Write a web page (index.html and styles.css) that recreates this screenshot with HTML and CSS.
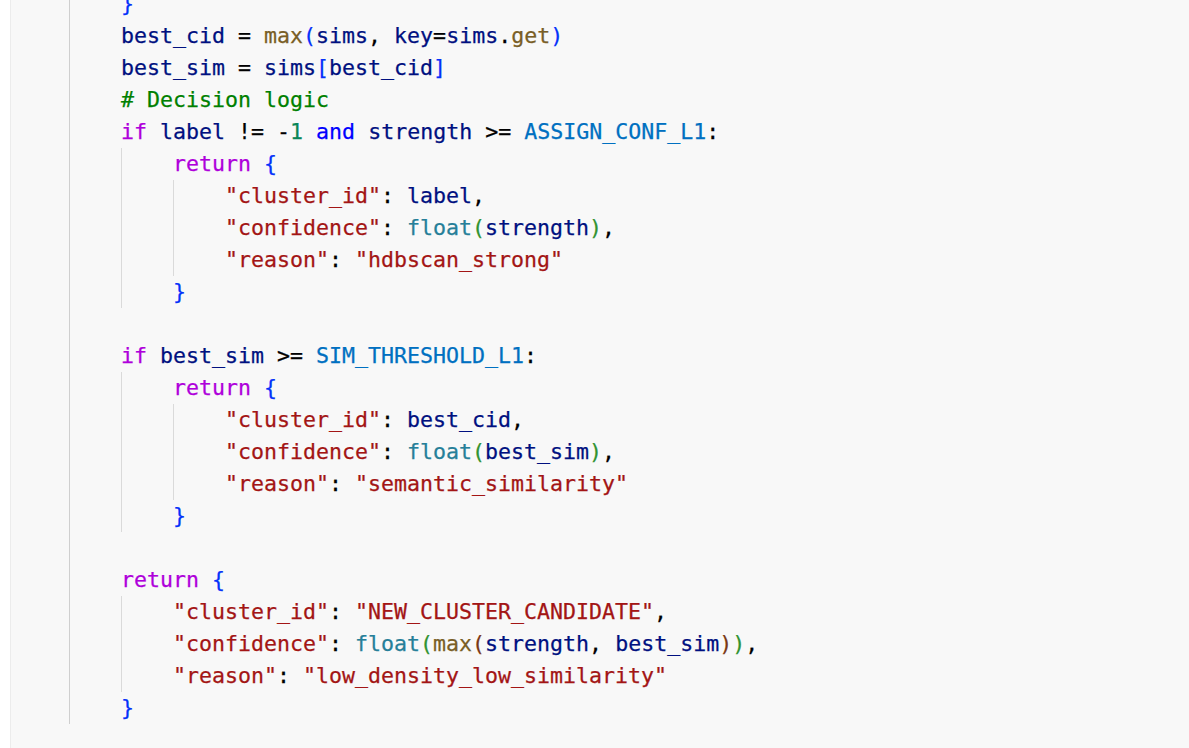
FILE: index.html
```html
<!DOCTYPE html>
<html>
<head>
<meta charset="utf-8">
<link rel="stylesheet" href="styles.css">
</head>
<body>
<div class="editor">
<div class="code">
<div class="ln"><span class="pad"></span><span class="g g1"></span><span class="b1">}</span></div>
<div class="ln"><span class="pad"></span><span class="g g1"></span><span class="v">best_cid</span> = <span class="f">max</span><span class="b1">(</span><span class="v">sims</span>, <span class="v">key</span>=<span class="v">sims</span>.<span class="f">get</span><span class="b1">)</span></div>
<div class="ln"><span class="pad"></span><span class="g g1"></span><span class="v">best_sim</span> = <span class="v">sims</span><span class="b1">[</span><span class="v">best_cid</span><span class="b1">]</span></div>
<div class="ln"><span class="pad"></span><span class="g g1"></span><span class="c"># Decision logic</span></div>
<div class="ln"><span class="pad"></span><span class="g g1"></span><span class="k">if</span> <span class="v">label</span> != -<span class="n">1</span> <span class="a">and</span> <span class="v">strength</span> &gt;= <span class="cn">ASSIGN_CONF_L1</span>:</div>
<div class="ln"><span class="pad"></span><span class="g g1"></span><span class="g"></span><span class="k">return</span> <span class="b1">{</span></div>
<div class="ln"><span class="pad"></span><span class="g g1"></span><span class="g"></span><span class="g"></span><span class="s">"cluster_id"</span>: <span class="v">label</span>,</div>
<div class="ln"><span class="pad"></span><span class="g g1"></span><span class="g"></span><span class="g"></span><span class="s">"confidence"</span>: <span class="t">float</span><span class="b2">(</span><span class="v">strength</span><span class="b2">)</span>,</div>
<div class="ln"><span class="pad"></span><span class="g g1"></span><span class="g"></span><span class="g"></span><span class="s">"reason"</span>: <span class="s">"hdbscan_strong"</span></div>
<div class="ln"><span class="pad"></span><span class="g g1"></span><span class="g"></span><span class="b1">}</span></div>
<div class="ln"><span class="pad"></span><span class="g g1"></span></div>
<div class="ln"><span class="pad"></span><span class="g g1"></span><span class="k">if</span> <span class="v">best_sim</span> &gt;= <span class="cn">SIM_THRESHOLD_L1</span>:</div>
<div class="ln"><span class="pad"></span><span class="g g1"></span><span class="g"></span><span class="k">return</span> <span class="b1">{</span></div>
<div class="ln"><span class="pad"></span><span class="g g1"></span><span class="g"></span><span class="g"></span><span class="s">"cluster_id"</span>: <span class="v">best_cid</span>,</div>
<div class="ln"><span class="pad"></span><span class="g g1"></span><span class="g"></span><span class="g"></span><span class="s">"confidence"</span>: <span class="t">float</span><span class="b2">(</span><span class="v">best_sim</span><span class="b2">)</span>,</div>
<div class="ln"><span class="pad"></span><span class="g g1"></span><span class="g"></span><span class="g"></span><span class="s">"reason"</span>: <span class="s">"semantic_similarity"</span></div>
<div class="ln"><span class="pad"></span><span class="g g1"></span><span class="g"></span><span class="b1">}</span></div>
<div class="ln"><span class="pad"></span><span class="g g1"></span></div>
<div class="ln"><span class="pad"></span><span class="g g1"></span><span class="k">return</span> <span class="b1">{</span></div>
<div class="ln"><span class="pad"></span><span class="g g1"></span><span class="g"></span><span class="s">"cluster_id"</span>: <span class="s">"NEW_CLUSTER_CANDIDATE"</span>,</div>
<div class="ln"><span class="pad"></span><span class="g g1"></span><span class="g"></span><span class="s">"confidence"</span>: <span class="t">float</span><span class="b2">(</span><span class="f">max</span><span class="b3">(</span><span class="v">strength</span>, <span class="v">best_sim</span><span class="b3">)</span><span class="b2">)</span>,</div>
<div class="ln"><span class="pad"></span><span class="g g1"></span><span class="g"></span><span class="s">"reason"</span>: <span class="s">"low_density_low_similarity"</span></div>
<div class="ln"><span class="pad"></span><span class="g g1"></span><span class="b1">}</span></div>
</div>
</div>
</body>
</html>
```
FILE: styles.css
```css
html, body {
  margin: 0;
  padding: 0;
  background: #ffffff;
  height: 100%;
  overflow: hidden;
}
.editor {
  display: flow-root;
  margin-left: 10px;
  height: 100%;
  background: #f8f8f8;
  border-left: 1px solid #ececec;
  padding-left: 6px;
}
.code {
  margin-top: -12px;
  font-family: "DejaVu Sans Mono", monospace;
  font-size: 21.6px;
  color: #000000;
  -webkit-text-stroke: 0.25px currentColor;
}
.ln {
  height: 32px;
  line-height: 32px;
  white-space: pre;
}
.pad, .g {
  display: inline-block;
  width: 52px;
  height: 32px;
  vertical-align: top;
}
.g {
  box-shadow: inset 1px 0 0 #dadada;
}
.g1 {
  box-shadow: inset 1px 0 0 #cfcfcf;
}
.v { color: #001080; }
.f { color: #795e26; }
.t { color: #267f99; }
.s { color: #a31515; }
.c { color: #008000; }
.k { color: #af00db; }
.a { color: #0000ff; }
.n { color: #098658; }
.cn { color: #0070c1; }
.b1 { color: #0431fa; }
.b2 { color: #319331; }
.b3 { color: #7b3814; }
```
